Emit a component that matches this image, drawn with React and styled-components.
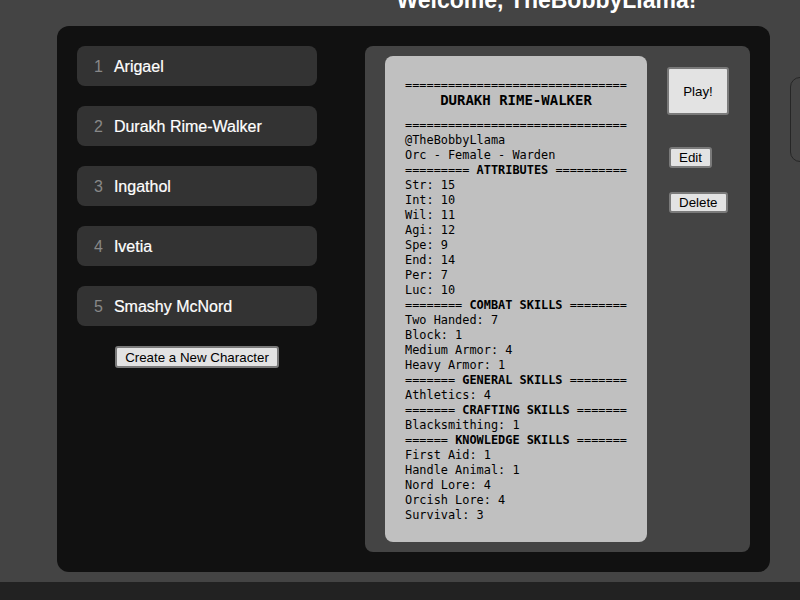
import styled, { createGlobalStyle } from "styled-components";

const GlobalStyle = createGlobalStyle`
  html, body {
    margin: 0;
    background: #444444;
    overflow: hidden;
    font-family: "Liberation Sans", Arial, sans-serif;
  }
`;

const Page = styled.div`
  width: 1093px;
  display: flex;
  flex-direction: column;
`;

const Heading = styled.h1`
  margin: -14px 0 12px 0;
  font-size: 23px;
  line-height: 28px;
  font-weight: bold;
  color: #ffffff;
  text-align: center;
`;

const MainRow = styled.div`
  display: flex;
  align-items: flex-start;
  gap: 20px;
  padding-left: 57px;
`;

const Frame = styled.div`
  box-sizing: border-box;
  width: 713px;
  height: 546px;
  padding: 20px;
  display: flex;
  gap: 48px;
  background: #111111;
  border-radius: 12px;
`;

const CharacterList = styled.div`
  width: 240px;
  display: flex;
  flex-direction: column;
  align-items: center;
  gap: 20px;
`;

const CharacterItem = styled.div`
  box-sizing: border-box;
  width: 100%;
  height: 40px;
  display: flex;
  align-items: center;
  padding: 2px 0 0 17px;
  background: #333333;
  border-radius: 8px;
  font-size: 16px;
`;

const ItemNumber = styled.span`
  color: #888888;
  margin-right: 11px;
`;

const ItemName = styled.span`
  color: #ffffff;
  -webkit-text-stroke: 0.2px #ffffff;
`;

const Button = styled.button`
  box-sizing: border-box;
  font-family: "Liberation Sans", Arial, sans-serif;
  font-size: 13.33px;
  line-height: 15px;
  color: #000000;
  background: #e3e3e3;
  border: 2px solid #7a7a7a;
  border-radius: 3px;
  padding: 1px 8px;
  height: ${(props) => props.$height || "21px"};
  margin-left: ${(props) => props.$ml || "0"};
  margin-top: ${(props) => props.$mt || "0"};
  cursor: pointer;
`;

const PlayButton = styled(Button)`
  width: 62px;
  height: 48px;
  padding: 0;
`;

const Panel = styled.div`
  flex: 1;
  box-sizing: border-box;
  display: flex;
  padding: 10px 0 10px 20px;
  background: #444444;
  border-radius: 8px;
`;

const Sheet = styled.div`
  box-sizing: border-box;
  width: 262px;
  padding: 22px 20px;
  background: #c0c0c0;
  border-radius: 8px;
  font-family: "DejaVu Sans Mono", "Liberation Mono", monospace;
  font-size: 11.9px;
  line-height: 15px;
  color: #000000;
  white-space: pre;
`;

const SheetLine = styled.div`
  font-weight: normal;
`;

const SheetTitle = styled.div`
  text-align: center;
  font-weight: bold;
  font-size: 14px;
  padding-bottom: 10px;
`;

const Actions = styled.div`
  display: flex;
  flex-direction: column;
  align-items: flex-start;
  padding: 11px 0 0 20px;
`;

const SideCard = styled.div`
  box-sizing: border-box;
  margin-top: 51px;
  width: 200px;
  height: 85px;
  border: 1px solid #262626;
  border-radius: 10px;
`;

const Footer = styled.div`
  margin-top: 10px;
  height: 40px;
  background: #222222;
`;

const characters = [
  "Arigael",
  "Durakh Rime-Walker",
  "Ingathol",
  "Ivetia",
  "Smashy McNord",
];

const RULE = "===============================";

const sheet = [
  ["@TheBobbyLlama"],
  ["Orc - Female - Warden"],
  ["=========", "ATTRIBUTES", "=========="],
  ["Str: 15"],
  ["Int: 10"],
  ["Wil: 11"],
  ["Agi: 12"],
  ["Spe: 9"],
  ["End: 14"],
  ["Per: 7"],
  ["Luc: 10"],
  ["========", "COMBAT SKILLS", "========"],
  ["Two Handed: 7"],
  ["Block: 1"],
  ["Medium Armor: 4"],
  ["Heavy Armor: 1"],
  ["=======", "GENERAL SKILLS", "========"],
  ["Athletics: 4"],
  ["=======", "CRAFTING SKILLS", "======="],
  ["Blacksmithing: 1"],
  ["======", "KNOWLEDGE SKILLS", "======="],
  ["First Aid: 1"],
  ["Handle Animal: 1"],
  ["Nord Lore: 4"],
  ["Orcish Lore: 4"],
  ["Survival: 3"],
];

export default function App() {
  return (
    <>
      <GlobalStyle />
      <Page>
        <Heading>Welcome, TheBobbyLlama!</Heading>
        <MainRow>
          <Frame>
            <CharacterList>
              {characters.map((name, i) => (
                <CharacterItem key={name}>
                  <ItemNumber>{i + 1}</ItemNumber>
                  <ItemName>{name}</ItemName>
                </CharacterItem>
              ))}
              <Button $height="22px">Create a New Character</Button>
            </CharacterList>
            <Panel>
              <Sheet>
                <SheetLine>{RULE}</SheetLine>
                <SheetTitle>DURAKH RIME-WALKER</SheetTitle>
                <SheetLine>{RULE}</SheetLine>
                {sheet.map((line, i) =>
                  line.length === 3 ? (
                    <SheetLine key={i}>
                      {line[0]} <b>{line[1]}</b> {line[2]}
                    </SheetLine>
                  ) : (
                    <SheetLine key={i}>{line[0]}</SheetLine>
                  )
                )}
              </Sheet>
              <Actions>
                <PlayButton>Play!</PlayButton>
                <Button $mt="32px" $ml="2px">Edit</Button>
                <Button $mt="24px" $ml="2px">Delete</Button>
              </Actions>
            </Panel>
          </Frame>
          <SideCard />
        </MainRow>
        <Footer />
      </Page>
    </>
  );
}
